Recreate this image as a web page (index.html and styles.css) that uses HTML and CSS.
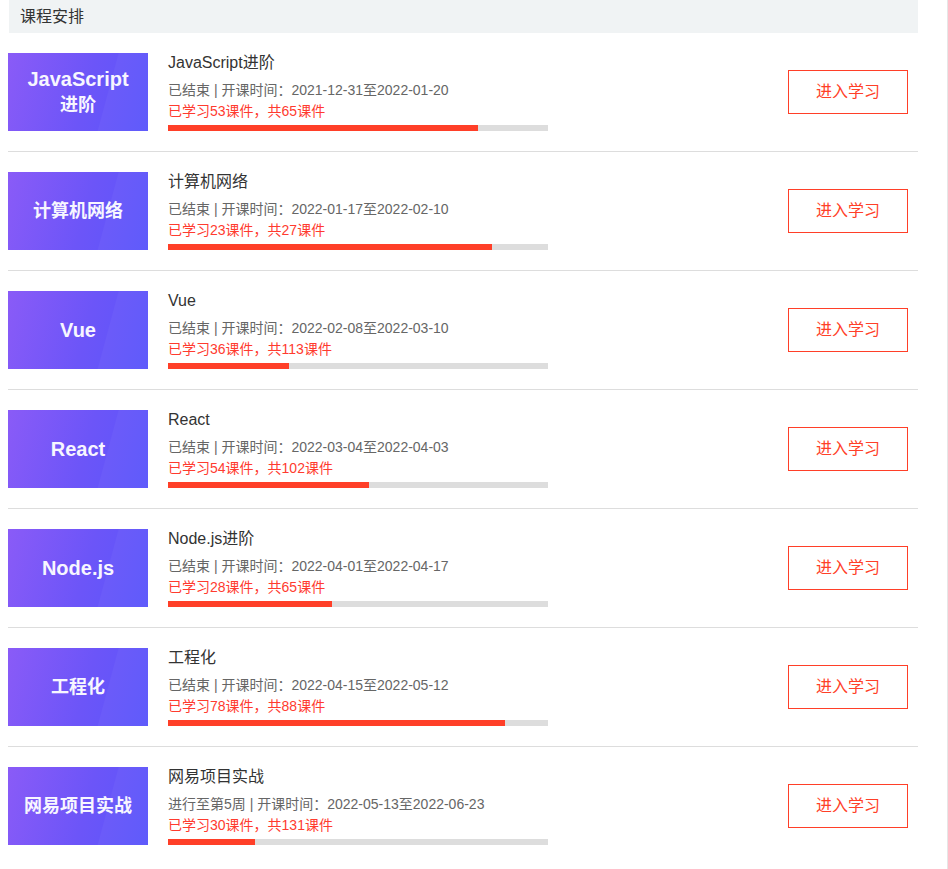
FILE: index.html
```html
<!DOCTYPE html>
<html lang="zh-CN">
<head>
<meta charset="utf-8">
<title>课程安排</title>
<link rel="stylesheet" href="styles.css">
</head>
<body>
<div class="frame">
  <div class="main">
    <div class="section-head">课程安排</div>
    <ul class="course-list">
      <li class="course">
        <div class="thumb"><span class="thumb-text"><span class="lat">JavaScript</span><br><span class="cjk">进阶</span></span></div>
        <div class="info">
          <div class="title">JavaScript进阶</div>
          <div class="meta">已结束 | 开课时间：2021-12-31至2022-01-20</div>
          <div class="progress-text">已学习53课件，共65课件</div>
          <div class="bar"><div class="fill" style="width:81.54%"></div></div>
        </div>
        <a class="btn" href="#">进入学习</a>
      </li>
      <li class="course">
        <div class="thumb"><span class="thumb-text cjk">计算机网络</span></div>
        <div class="info">
          <div class="title">计算机网络</div>
          <div class="meta">已结束 | 开课时间：2022-01-17至2022-02-10</div>
          <div class="progress-text">已学习23课件，共27课件</div>
          <div class="bar"><div class="fill" style="width:85.19%"></div></div>
        </div>
        <a class="btn" href="#">进入学习</a>
      </li>
      <li class="course">
        <div class="thumb"><span class="thumb-text lat">Vue</span></div>
        <div class="info">
          <div class="title">Vue</div>
          <div class="meta">已结束 | 开课时间：2022-02-08至2022-03-10</div>
          <div class="progress-text">已学习36课件，共113课件</div>
          <div class="bar"><div class="fill" style="width:31.86%"></div></div>
        </div>
        <a class="btn" href="#">进入学习</a>
      </li>
      <li class="course">
        <div class="thumb"><span class="thumb-text lat">React</span></div>
        <div class="info">
          <div class="title">React</div>
          <div class="meta">已结束 | 开课时间：2022-03-04至2022-04-03</div>
          <div class="progress-text">已学习54课件，共102课件</div>
          <div class="bar"><div class="fill" style="width:52.94%"></div></div>
        </div>
        <a class="btn" href="#">进入学习</a>
      </li>
      <li class="course">
        <div class="thumb"><span class="thumb-text lat">Node.js</span></div>
        <div class="info">
          <div class="title">Node.js进阶</div>
          <div class="meta">已结束 | 开课时间：2022-04-01至2022-04-17</div>
          <div class="progress-text">已学习28课件，共65课件</div>
          <div class="bar"><div class="fill" style="width:43.08%"></div></div>
        </div>
        <a class="btn" href="#">进入学习</a>
      </li>
      <li class="course">
        <div class="thumb"><span class="thumb-text cjk">工程化</span></div>
        <div class="info">
          <div class="title">工程化</div>
          <div class="meta">已结束 | 开课时间：2022-04-15至2022-05-12</div>
          <div class="progress-text">已学习78课件，共88课件</div>
          <div class="bar"><div class="fill" style="width:88.64%"></div></div>
        </div>
        <a class="btn" href="#">进入学习</a>
      </li>
      <li class="course">
        <div class="thumb"><span class="thumb-text cjk">网易项目实战</span></div>
        <div class="info">
          <div class="title">网易项目实战</div>
          <div class="meta">进行至第5周 | 开课时间：2022-05-13至2022-06-23</div>
          <div class="progress-text">已学习30课件，共131课件</div>
          <div class="bar"><div class="fill" style="width:22.9%"></div></div>
        </div>
        <a class="btn" href="#">进入学习</a>
      </li>
    </ul>
  </div>
</div>
</body>
</html>
```

FILE: styles.css
```css
html, body {
  margin: 0;
  padding: 0;
  background: #fff;
}

body {
  font-family: "Liberation Sans", "Noto Sans CJK SC", sans-serif;
  color: #333;
}

.frame {
  width: 947px;
  min-height: 100vh;
  border-right: 1px solid #e6e6e6;
}

.main {
  width: 910px;
  margin-left: 8px;
}

.section-head {
  margin-left: 1px;
  height: 33px;
  line-height: 33px;
  padding-left: 11px;
  background: #f0f3f4;
  font-size: 16px;
  color: #333;
}

.course-list {
  list-style: none;
  margin: 0;
  padding: 0;
}

.course {
  display: flex;
  align-items: center;
  padding: 20px 10px 20px 0;
  border-bottom: 1px solid #dddddd;
}

.course:last-child {
  border-bottom: none;
}

.thumb {
  position: relative;
  width: 140px;
  height: 78px;
  flex: none;
  display: flex;
  align-items: center;
  justify-content: center;
  background: linear-gradient(105deg, #8a5bf7 0%, #6c55f8 55%, #5a55fb 100%);
  overflow: hidden;
}

.thumb::after {
  content: "";
  position: absolute;
  inset: 0;
  background: rgba(255, 255, 255, 0.035);
  clip-path: polygon(79% 0, 100% 0, 100% 100%, 64% 100%);
}

.thumb-text {
  position: relative;
  z-index: 1;
  color: #f7f6ff;
  font-weight: bold;
  text-align: center;
  line-height: 24px;
}

.lat {
  font-size: 20px;
}

.cjk {
  font-size: 18px;
}

.info {
  flex: 1;
  margin-left: 20px;
  display: flex;
  flex-direction: column;
}

.title {
  font-size: 16px;
  line-height: 20px;
  color: #333;
}

.meta {
  margin-top: 7px;
  font-size: 14px;
  line-height: 20px;
  color: #666;
}

.progress-text {
  margin-top: 1px;
  font-size: 14px;
  line-height: 20px;
  color: #ff3b2f;
}

.bar {
  margin-top: 4px;
  width: 380px;
  height: 6px;
  background: #dddddd;
}

.fill {
  height: 100%;
  background: #ff3f28;
}

.btn {
  flex: none;
  width: 118px;
  height: 42px;
  border: 1px solid #ff3f28;
  color: #ff3f28;
  font-size: 16px;
  line-height: 42px;
  text-align: center;
  text-decoration: none;
}
```
